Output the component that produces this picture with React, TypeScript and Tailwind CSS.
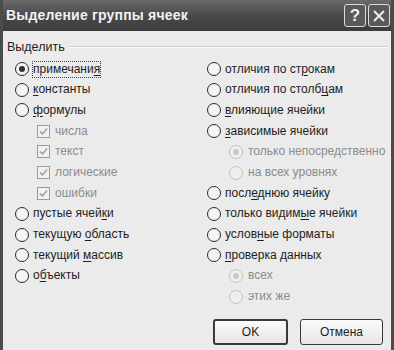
import React from 'react';

type Item = {
  label: string;
  key?: number; // index of underlined letter
  kind: 'radio' | 'check' | 'subradio';
  checked?: boolean;
  disabled?: boolean;
  focus?: boolean;
};

const left: Item[] = [
  { label: 'примечания', key: 9, kind: 'radio', checked: true, focus: true },
  { label: 'константы', key: 0, kind: 'radio' },
  { label: 'формулы', key: 0, kind: 'radio' },
  { label: 'числа', kind: 'check', checked: true, disabled: true },
  { label: 'текст', kind: 'check', checked: true, disabled: true },
  { label: 'логические', kind: 'check', checked: true, disabled: true },
  { label: 'ошибки', kind: 'check', checked: true, disabled: true },
  { label: 'пустые ячейки', key: 11, kind: 'radio' },
  { label: 'текущую область', key: 8, kind: 'radio' },
  { label: 'текущий массив', key: 8, kind: 'radio' },
  { label: 'объекты', key: 1, kind: 'radio' },
];

const right: Item[] = [
  { label: 'отличия по строкам', key: 13, kind: 'radio' },
  { label: 'отличия по столбцам', key: 16, kind: 'radio' },
  { label: 'влияющие ячейки', key: 0, kind: 'radio' },
  { label: 'зависимые ячейки', key: 0, kind: 'radio' },
  { label: 'только непосредственно', kind: 'subradio', checked: true, disabled: true },
  { label: 'на всех уровнях', kind: 'subradio', disabled: true },
  { label: 'последнюю ячейку', key: 4, kind: 'radio' },
  { label: 'только видимые ячейки', key: 12, kind: 'radio' },
  { label: 'условные форматы', key: 5, kind: 'radio' },
  { label: 'проверка данных', key: 0, kind: 'radio' },
  { label: 'всех', kind: 'subradio', checked: true, disabled: true },
  { label: 'этих же', kind: 'subradio', disabled: true },
];

function Label({ text, k }: { text: string; k?: number }) {
  if (k === undefined) return <>{text}</>;
  return (
    <>
      {text.slice(0, k)}
      <span className="underline underline-offset-2">{text[k]}</span>
      {text.slice(k + 1)}
    </>
  );
}

function Radio({ checked, disabled }: { checked?: boolean; disabled?: boolean }) {
  return (
    <span
      className={
        'flex h-[14px] w-[14px] shrink-0 items-center justify-center rounded-full border-[1.5px] ' +
        (disabled ? 'border-[#c4c4c4] bg-[#efefef]' : 'border-[#2a2a2a] bg-[#f4f4f4]')
      }
    >
      {checked && (
        <span className={'h-[6px] w-[6px] rounded-full ' + (disabled ? 'bg-[#c8c8c8]' : 'bg-[#333]')} />
      )}
    </span>
  );
}

function Check() {
  return (
    <span className="flex h-[13px] w-[13px] shrink-0 items-center justify-center border border-[#9a9a9a] bg-[#f2f2f2]">
      <svg width="9" height="9" viewBox="0 0 9 9">
        <path d="M1 4.5 L3.5 7 L8 1.5" fill="none" stroke="#a8a8a8" strokeWidth="1.8" />
      </svg>
    </span>
  );
}

function Row({ item }: { item: Item }) {
  const indent = item.kind === 'radio' ? '' : 'pl-[22px]';
  return (
    <div className={'flex h-[20.7px] items-center gap-[4px] ' + indent}>
      {item.kind === 'check' ? <Check /> : <Radio checked={item.checked} disabled={item.disabled} />}
      <span
        className={
          'whitespace-nowrap leading-[15px] ' +
          (item.disabled ? 'text-[#8c8c8c] ml-[1px]' : 'text-[#1e1e1e]') +
          (item.focus ? ' outline outline-1 outline-dotted outline-[#444]' : '')
        }
      >
        <Label text={item.label} k={item.key} />
      </span>
    </div>
  );
}

export default function App() {
  return (
    <div
      className="h-[350px] w-[394px] overflow-hidden border-x-[3px] border-[#4b4b4b] bg-[#ebebeb] text-[12px]"
      style={{ fontFamily: '"Liberation Sans", Arial, sans-serif' }}
    >
      <div className="flex h-[31px] items-center justify-between bg-gradient-to-b from-[#6a6a6a] via-[#4a4a4a] to-[#3c3c3c] pl-[3px] pr-[1px]">
        <span className="text-[14px] font-bold tracking-[0.2px] text-[#f2f2f2]">Выделение группы ячеек</span>
        <div className="flex gap-[2px]">
          <span className="flex h-[23px] w-[22px] items-center justify-center rounded-[3px] border border-[#dcdcdc] bg-[#5a5a5a] text-[17px] font-bold leading-none text-[#eee]">
            ?
          </span>
          <span className="flex h-[23px] w-[22px] items-center justify-center rounded-[3px] border border-[#dcdcdc] bg-[#5a5a5a]">
            <svg width="14" height="14" viewBox="0 0 14 14">
              <path d="M2 2 L12 12 M12 2 L2 12" stroke="#eee" strokeWidth="2" />
            </svg>
          </span>
        </div>
      </div>

      <div className="px-[4px] pt-[7px]">
        <div className="flex items-center gap-[4px]">
          <span className="text-[12.5px] text-[#1e1e1e]">Выделить</span>
          <span className="h-[2px] flex-1 border-t border-b border-t-[#cfcfcf] border-b-[#fafafa]" />
        </div>

        <div className="mt-[2px] grid grid-cols-[192px_1fr] pl-[8px]">
          <div className="flex flex-col">
            {left.map((it, i) => (
              <Row key={i} item={it} />
            ))}
          </div>
          <div className="flex flex-col">
            {right.map((it, i) => (
              <Row key={i} item={it} />
            ))}
          </div>
        </div>

        <div className="mt-[12px] flex justify-end gap-[12px] pr-[4px]">
          <button className="h-[26px] w-[75px] rounded-[3px] border-2 border-[#3a3a3a] bg-gradient-to-b from-[#fbfbfb] to-[#e6e6e6] text-[12px] text-[#1e1e1e]">
            OK
          </button>
          <button className="h-[26px] w-[83px] rounded-[3px] border border-[#3a3a3a] bg-gradient-to-b from-[#fbfbfb] to-[#e6e6e6] text-[12px] text-[#1e1e1e]">
            Отмена
          </button>
        </div>
      </div>
    </div>
  );
}
